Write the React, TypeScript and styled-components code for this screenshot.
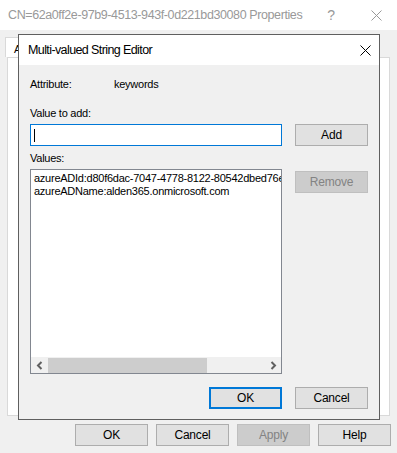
import React from "react";
import styled, { createGlobalStyle } from "styled-components";

const GlobalStyle = createGlobalStyle`
  html, body {
    margin: 0;
    padding: 0;
    background: #f0f0f0;
  }
  body {
    font-family: "Liberation Sans", Arial, sans-serif;
    font-size: 11px;
    letter-spacing: -0.25px;
    color: #000;
  }
`;

const Desktop = styled.div`
  position: relative;
  width: 397px;
  height: 453px;
  overflow: hidden;
`;

const Window = styled.div`
  display: flex;
  flex-direction: column;
  width: 397px;
  height: 453px;
  background: #f0f0f0;
`;

const TitleBar = styled.div<{ $pad?: number }>`
  display: flex;
  align-items: center;
  height: 30px;
  background: #fff;
  padding-left: ${(p) => p.$pad ?? 8}px;
  flex-shrink: 0;
`;

const TitleText = styled.div<{ $size: number; $spacing: number; $color: string }>`
  flex: 1;
  font-size: ${(p) => p.$size}px;
  letter-spacing: ${(p) => p.$spacing}px;
  color: ${(p) => p.$color};
  white-space: nowrap;
`;

const CaptionButton = styled.div<{ $w: number }>`
  width: ${(p) => p.$w}px;
  height: 30px;
  display: flex;
  align-items: center;
  justify-content: center;
  color: #999;
  font-size: 14px;
`;

const Body = styled.div`
  flex: 1;
  display: flex;
  flex-direction: column;
`;

const TabRow = styled.div`
  display: flex;
  height: 20px;
  margin-top: 7px;
  padding-left: 5px;
`;

const Tab = styled.div`
  background: #fff;
  border: 1px solid #d9d9d9;
  border-bottom: none;
  padding: 3px 0 0 8px;
  width: 40px;
  line-height: 16px;
  overflow: hidden;
  white-space: nowrap;
`;

const TabPane = styled.div`
  height: 357px;
  margin: 0 7px 0 7px;
  background: #fff;
  border: 1px solid #d9d9d9;
`;

const ButtonRow = styled.div<{ $top: number; $right: number; $gap: number }>`
  display: flex;
  justify-content: flex-end;
  gap: ${(p) => p.$gap}px;
  margin-top: ${(p) => p.$top}px;
  padding-right: ${(p) => p.$right}px;
`;

const Button = styled.div<{ $default?: boolean; $disabled?: boolean }>`
  box-sizing: border-box;
  width: 73px;
  height: 22px;
  display: flex;
  align-items: center;
  justify-content: center;
  background: ${(p) => (p.$disabled ? "#cccccc" : "#e1e1e1")};
  border: ${(p) =>
    p.$default
      ? "2px solid #0078d7"
      : p.$disabled
      ? "1px solid #bfbfbf"
      : "1px solid #adadad"};
  color: ${(p) => (p.$disabled ? "#838383" : "#000")};
  font-size: 12px;
  letter-spacing: -0.2px;
`;

const Dialog = styled.div`
  position: absolute;
  left: 18px;
  top: 34px;
  width: 362px;
  height: 386px;
  box-sizing: border-box;
  border: 1px solid #5f5f5f;
  background: #f0f0f0;
  display: flex;
  flex-direction: column;
`;

const DialogBody = styled.div`
  flex: 1;
  display: flex;
  flex-direction: column;
  padding: 12px 11px 0 11px;
`;

const Label = styled.div<{ $top?: number }>`
  height: 14px;
  line-height: 14px;
  margin-top: ${(p) => p.$top ?? 0}px;
  white-space: nowrap;
`;

const AttrRow = styled.div`
  display: flex;
  height: 14px;
  line-height: 14px;
`;

const AttrName = styled.div`
  width: 84px;
`;

const FieldRow = styled.div<{ $top: number }>`
  display: flex;
  justify-content: space-between;
  align-items: flex-start;
  margin-top: ${(p) => p.$top}px;
`;

const TextInput = styled.div`
  box-sizing: border-box;
  width: 252px;
  height: 22px;
  border: 1px solid #0078d7;
  background: #fff;
  display: flex;
  align-items: center;
  padding-left: 3px;
`;

const Caret = styled.div`
  width: 1px;
  height: 13px;
  background: #000;
`;

const ListBox = styled.div`
  box-sizing: border-box;
  width: 252px;
  height: 205px;
  border: 1px solid #828790;
  background: #fff;
  display: flex;
  flex-direction: column;
`;

const ListItems = styled.div`
  flex: 1;
  overflow: hidden;
  padding: 2px 0 0 3px;
  line-height: 13px;
  white-space: nowrap;
`;

const HScroll = styled.div`
  height: 16px;
  background: #f0f0f0;
  display: flex;
  align-items: stretch;
`;

const ScrollArrow = styled.div`
  width: 17px;
  display: flex;
  align-items: center;
  justify-content: center;
`;

const Track = styled.div`
  flex: 1;
  display: flex;
  align-items: center;
`;

const Thumb = styled.div`
  height: 15px;
  background: #cdcdcd;
`;

const Chevron = ({ dir }: { dir: "left" | "right" }) => (
  <svg width="8" height="9" viewBox="0 0 8 9">
    <path
      d={dir === "left" ? "M5.5 1 L2 4.5 L5.5 8" : "M2.5 1 L6 4.5 L2.5 8"}
      fill="none"
      stroke="#606060"
      strokeWidth="2"
    />
  </svg>
);

const CloseGlyph = ({ color, size }: { color: string; size: number }) => (
  <svg width={size} height={size} viewBox={`0 0 ${size} ${size}`}>
    <path
      d={`M0.5 0.5 L${size - 0.5} ${size - 0.5} M${size - 0.5} 0.5 L0.5 ${size - 0.5}`}
      stroke={color}
      strokeWidth="1"
    />
  </svg>
);

export default function App() {
  const values = [
    "azureADId:d80f6dac-7047-4778-8122-80542dbed76e",
    "azureADName:alden365.onmicrosoft.com",
  ];
  return (
    <>
      <GlobalStyle />
      <Desktop>
        <Window>
          <TitleBar>
            <TitleText $size={12.5} $spacing={-0.4} $color="#999">
              CN=62a0ff2e-97b9-4513-943f-0d221bd30080 Properties
            </TitleText>
            <CaptionButton $w={48}>?</CaptionButton>
            <CaptionButton $w={42}>
              <CloseGlyph color="#999" size={11} />
            </CaptionButton>
          </TitleBar>
          <Body>
            <TabRow>
              <Tab>Attribute Editor</Tab>
            </TabRow>
            <TabPane />
            <ButtonRow $top={8} $right={6} $gap={8}>
              <Button>OK</Button>
              <Button>Cancel</Button>
              <Button $disabled>Apply</Button>
              <Button>Help</Button>
            </ButtonRow>
          </Body>
        </Window>

        <Dialog>
          <TitleBar $pad={9}>
            <TitleText $size={12.5} $spacing={-0.6} $color="#000">
              Multi-valued String Editor
            </TitleText>
            <CaptionButton $w={28}>
              <CloseGlyph color="#000" size={11} />
            </CaptionButton>
          </TitleBar>
          <DialogBody>
            <AttrRow>
              <AttrName>Attribute:</AttrName>
              <div>keywords</div>
            </AttrRow>
            <Label $top={15}>Value to add:</Label>
            <FieldRow $top={4}>
              <TextInput>
                <Caret />
              </TextInput>
              <Button>Add</Button>
            </FieldRow>
            <Label $top={5}>Values:</Label>
            <FieldRow $top={4}>
              <ListBox>
                <ListItems>
                  {values.map((v) => (
                    <div key={v}>{v}</div>
                  ))}
                </ListItems>
                <HScroll>
                  <ScrollArrow>
                    <Chevron dir="left" />
                  </ScrollArrow>
                  <Track>
                    <Thumb style={{ width: 159 }} />
                  </Track>
                  <ScrollArrow>
                    <Chevron dir="right" />
                  </ScrollArrow>
                </HScroll>
              </ListBox>
              <Button $disabled style={{ marginTop: 2 }}>
                Remove
              </Button>
            </FieldRow>
            <ButtonRow $top={13} $right={0} $gap={13}>
              <Button $default>OK</Button>
              <Button>Cancel</Button>
            </ButtonRow>
          </DialogBody>
        </Dialog>
      </Desktop>
    </>
  );
}
